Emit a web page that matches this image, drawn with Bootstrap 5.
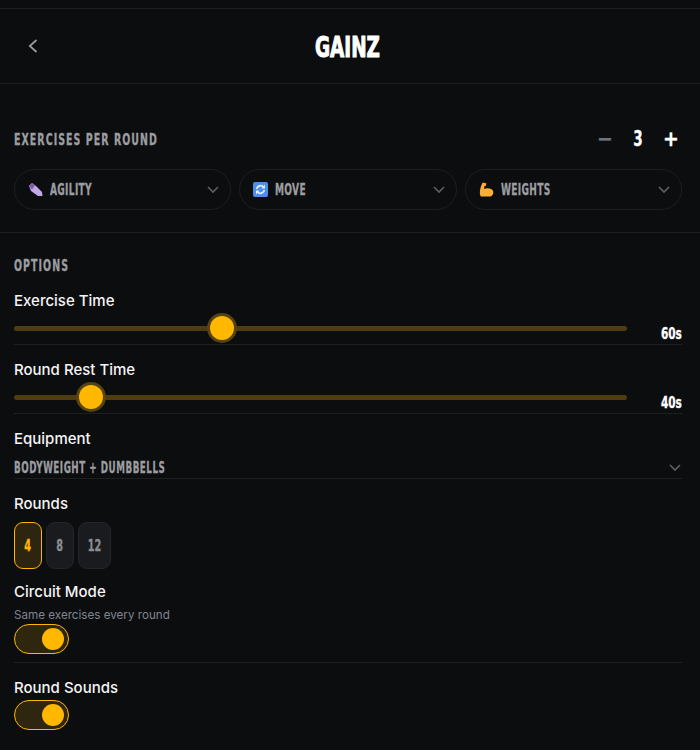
<!DOCTYPE html>
<html lang="en">
<head>
    <meta charset="UTF-8">
    <meta name="viewport" content="width=device-width, initial-scale=1.0">
    <title>Gainz</title>
    <link rel="stylesheet" href="https://cdn.jsdelivr.net/npm/bootstrap@5.3.0/dist/css/bootstrap.min.css">
    <style>
        body { background: #0c0d0f; color: #fff; font-family: Inter, "Noto Sans", sans-serif; overflow: hidden; }
        .cond { font-family: "DejaVu Sans Condensed", "Liberation Sans", sans-serif; font-weight: 700; display: inline-block; transform-origin: left center; -webkit-text-stroke: .3px currentColor; white-space: nowrap; }
        .topline { height: 9px; border-bottom: 1px solid #1e1f22; }
        .app-head { height: 75px; border-bottom: 1px solid #1e1f22; padding: 0 14px 0 26px; }
        .title-wrap { padding-right: 5px; }
        .app-title { font-size: 28px; transform: scaleX(.73); transform-origin: center; line-height: 1; margin-top: 4px; -webkit-text-stroke: 1px #fff; }
        .sect-a { height: 149px; border-bottom: 1px solid #1e1f22; padding: 44px 18px 0 14px; }
        .sect-label { font-size: 15px; letter-spacing: 1.5px; color: #9c9da0; line-height: 22px; transform: translateY(1px) scaleX(.7); }
        .stepper { width: 88px; }
        .stepper span { width: 22px; text-align: center; }
        .step-val { font-size: 21px; line-height: 22px; transform: scaleX(.72); transform-origin: center; }
        .step-sign { font-size: 21px; line-height: 22px; transform-origin: center; }
        .pill-row { margin-top: 19px; }
        .pill-sel { height: 41px; border: 1px solid #1e1f22; border-radius: 21px; padding: 0 10px 0 13px; flex: 1 1 0; gap: 7px; }
        .pill-name { font-size: 15.5px; letter-spacing: .5px; color: #9c9da0; transform: translateY(1px) scaleX(.65); }
        .sect-b { padding: 19px 18px 0 14px; }
        .opt-label { font-size: 15px; font-weight: 500; line-height: 20px; color: #f4f4f5; margin-top: 15px; }
        .rule-row { border-bottom: 1px solid #1e1f22; }
        .slider-row { height: 34px; }
        .slider-range { width: 613px; height: 30px; margin-top: 2px; }
        .slider-range::-webkit-slider-runnable-track { height: 5px; background: #4f3d0f; border-radius: 3px; }
        .slider-range::-webkit-slider-thumb { width: 24px; height: 24px; margin-top: -9.5px; background: #ffb700; border: 0; border-radius: 50%; box-shadow: 0 0 0 3px #554312; }
        .slider-val { font-size: 15px; color: #fff; margin-top: 15px; line-height: 16px; transform: scaleX(.78); transform-origin: right center; }
        .equip-row { margin-top: 11px; padding-bottom: 2px; }
        .equip-val { font-size: 15px; letter-spacing: .8px; color: #9c9da0; line-height: 16px; transform: scaleX(.65); }
        .round-list { margin-top: 8px; }
        .round-btn { height: 47px; background: #1a1b1e; border: 1px solid #25262a; border-radius: 9px; color: #8c8d92; padding: 0; width: 28px; }
        .round-wide { width: 33px; }
        .round-btn.is-on { background: #2d2510; border-color: #ffb700; color: #ffb700; }
        .round-num { font-size: 15px; transform: scaleX(.72); transform-origin: center; }
        .opt-after { margin-top: 13px; }
        .sub-note { font-size: 11.65px; color: #7f8590; line-height: 16px; margin-top: 5px; }
        .toggle-box { width: 55px; height: 30px; background: #2f2610; border: 1px solid #ffb700; border-radius: 15px; padding: 0 4px; margin-top: 2px; }
        .toggle-tight { margin-top: 1px; }
        .toggle-knob { width: 22px; height: 22px; background: #ffb700; border-radius: 50%; }
        .toggle-rule { height: 9px; }
    </style>
</head>
<body>
    <div class="topline"></div>

    <div class="app-head d-flex align-items-center position-relative">
        <svg width="14" height="14" viewBox="0 0 14 14" fill="none" stroke="#9c9da0" stroke-width="1.7"><path d="M10.5 1 L3.8 7 L10.5 13"/></svg>
        <div class="title-wrap position-absolute start-0 end-0 text-center"><span class="cond app-title">GAINZ</span></div>
    </div>

    <div class="sect-a">
        <div class="d-flex justify-content-between align-items-center">
            <span class="cond sect-label">EXERCISES PER ROUND</span>
            <div class="stepper d-flex justify-content-between align-items-center">
                <span class="cond step-sign text-secondary">&minus;</span>
                <span class="cond step-val">3</span>
                <span class="cond step-sign">+</span>
            </div>
        </div>
        <div class="pill-row d-flex gap-2">
            <div class="pill-sel d-flex align-items-center">
                <svg width="15" height="15" viewBox="0 0 15 15"><path d="M1 4 L4 1 L8 4 L14 10 L14.5 14 L10 14 L3 9 Z" fill="#c3a8e8"/><path d="M1 4 L4 1 L7 3.5 L4 7.5 Z" fill="#7d5ba8"/></svg>
                <span class="cond pill-name flex-grow-1">AGILITY</span>
                <svg width="14" height="10" viewBox="0 0 14 10" fill="none" stroke="#5c5d62" stroke-width="1.7"><path d="M2 2 L7 7 L12 2"/></svg>
            </div>
            <div class="pill-sel d-flex align-items-center">
                <svg width="15" height="15" viewBox="0 0 15 15"><rect width="15" height="15" rx="2" fill="#4c8fe8"/><path d="M3.8 7 A3.8 3.8 0 0 1 10.6 5.2 M11.2 8 A3.8 3.8 0 0 1 4.4 9.8" fill="none" stroke="#e6f0fb" stroke-width="1.7"/><path d="M12 2.5 L12 6.5 L8.5 6.5 Z M3 12.5 L3 8.5 L6.5 8.5 Z" fill="#e6f0fb"/></svg>
                <span class="cond pill-name flex-grow-1">MOVE</span>
                <svg width="14" height="10" viewBox="0 0 14 10" fill="none" stroke="#5c5d62" stroke-width="1.7"><path d="M2 2 L7 7 L12 2"/></svg>
            </div>
            <div class="pill-sel d-flex align-items-center">
                <svg width="15" height="15" viewBox="0 0 16 15"><path d="M4 0 L8 1 L7 4 L5.5 4 L5.5 7 C8 5.5 14 6 15 9 C16 12 14 15 11 15 L2 15 C0 12 1 5 4 0 Z" fill="#fbb034"/></svg>
                <span class="cond pill-name flex-grow-1">WEIGHTS</span>
                <svg width="14" height="10" viewBox="0 0 14 10" fill="none" stroke="#5c5d62" stroke-width="1.7"><path d="M2 2 L7 7 L12 2"/></svg>
            </div>
        </div>
    </div>

    <div class="sect-b">
        <div class="cond sect-label">OPTIONS</div>

        <div class="opt-label">Exercise Time</div>
        <div class="slider-row rule-row d-flex justify-content-between">
            <input type="range" class="form-range slider-range" min="20" max="140" step="5" value="60" aria-label="Exercise Time">
            <span class="cond slider-val">60s</span>
        </div>

        <div class="opt-label">Round Rest Time</div>
        <div class="slider-row rule-row d-flex justify-content-between">
            <input type="range" class="form-range slider-range" min="30" max="120" step="5" value="40" aria-label="Round Rest Time">
            <span class="cond slider-val">40s</span>
        </div>

        <div class="opt-label">Equipment</div>
        <div class="equip-row rule-row d-flex justify-content-between align-items-center">
            <span class="cond equip-val">BODYWEIGHT + DUMBBELLS</span>
            <svg width="14" height="10" viewBox="0 0 14 10" fill="none" stroke="#5c5d62" stroke-width="1.7"><path d="M2 2 L7 7 L12 2"/></svg>
        </div>

        <div class="opt-label">Rounds</div>
        <div class="round-list d-flex gap-1">
            <button type="button" class="round-btn is-on"><span class="cond round-num">4</span></button>
            <button type="button" class="round-btn"><span class="cond round-num">8</span></button>
            <button type="button" class="round-btn round-wide"><span class="cond round-num">12</span></button>
        </div>

        <div class="opt-label opt-after">Circuit Mode</div>
        <div class="sub-note">Same exercises every round</div>
        <div class="toggle-box toggle-tight d-flex align-items-center justify-content-end"><span class="toggle-knob"></span></div>

        <div class="toggle-rule rule-row"></div>

        <div class="opt-label">Round Sounds</div>
        <div class="toggle-box d-flex align-items-center justify-content-end"><span class="toggle-knob"></span></div>
    </div>

    <script src="https://cdn.jsdelivr.net/npm/bootstrap@5.3.0/dist/js/bootstrap.bundle.min.js"></script>
</body>
</html>
